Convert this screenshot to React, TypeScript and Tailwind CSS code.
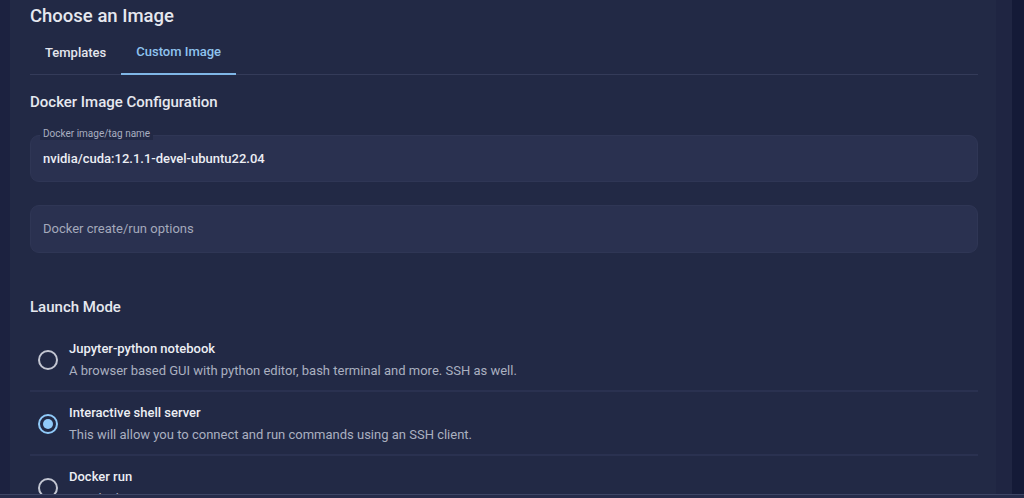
import { useState } from 'react'

type Mode = {
  id: string
  title: string
  description: string
}

const modes: Mode[] = [
  {
    id: 'jupyter',
    title: 'Jupyter-python notebook',
    description: 'A browser based GUI with python editor, bash terminal and more. SSH as well.',
  },
  {
    id: 'ssh',
    title: 'Interactive shell server',
    description: 'This will allow you to connect and run commands using an SSH client.',
  },
  {
    id: 'docker',
    title: 'Docker run',
    description: 'Use docker ENTRYPOINT.',
  },
]

function Radio({ checked }: { checked: boolean }) {
  return (
    <span
      className={`flex h-[20px] w-[20px] shrink-0 items-center justify-center rounded-full border-2 ${
        checked ? 'border-[#90caf9]' : 'border-[#c3c6d2]'
      }`}
    >
      {checked && <span className="h-[10px] w-[10px] rounded-full bg-[#90caf9]" />}
    </span>
  )
}

export default function App() {
  const [tab, setTab] = useState('custom')
  const [mode, setMode] = useState('ssh')

  return (
    <div className="flex h-[498px] overflow-hidden bg-[#141a37] font-['Roboto',sans-serif] text-[#e8eaf0]">
      <div className="w-[10px] shrink-0 bg-[#1c2240]" />

      {/* Main panel */}
      <div className="w-[986px] shrink-0 bg-[#222945] pl-[20px] pr-[18px]">
        <h1 className="pt-[4px] text-[18.5px] font-medium leading-[24px] text-[#e6e8ef]">Choose an Image</h1>

        {/* Tabs */}
        <div className="mt-[2px] flex border-b border-[#343b59]">
          <button
            onClick={() => setTab('templates')}
            className={`-mb-px h-[45px] px-[15px] text-[13px] font-medium ${
              tab === 'templates' ? 'border-b-2 border-[#7fb6e6] text-[#8fc3ef]' : 'text-[#e4e6ee]'
            }`}
          >
            Templates
          </button>
          <button
            onClick={() => setTab('custom')}
            className={`-mb-px h-[45px] px-[15px] text-[13px] font-medium ${
              tab === 'custom' ? 'border-b-2 border-[#7fb6e6] text-[#8fc3ef]' : 'text-[#e4e6ee]'
            }`}
          >
            Custom Image
          </button>
        </div>

        <h2 className="mt-[17px] text-[15px] font-medium leading-[20px] text-[#e6e8ef]">Docker Image Configuration</h2>

        {/* Inputs */}
        <div className="relative mt-[23px]">
          <span className="absolute left-[10px] top-[-7px] bg-[#222945] px-[3px] text-[10px] leading-[12px] text-[#a9aec0]">
            Docker image/tag name
          </span>
          <div className="flex h-[47px] items-center rounded-[9px] border border-[#2f3655] bg-[#2a3150] px-[12px] text-[13px] font-medium text-[#eceef4]">
            nvidia/cuda:12.1.1-devel-ubuntu22.04
          </div>
        </div>

        <div className="mt-[23px] flex h-[48px] items-center rounded-[9px] border border-[#2f3655] bg-[#2a3150] px-[12px] text-[13px] text-[#a4a9bb]">
          Docker create/run options
        </div>

        <h2 className="mt-[44px] text-[15px] font-medium leading-[20px] text-[#e6e8ef]">Launch Mode</h2>

        {/* Launch modes */}
        <div className="mt-[11px] flex flex-col">
          {modes.map((m, i) => (
            <button
              key={m.id}
              onClick={() => setMode(m.id)}
              className={`flex items-center gap-[11px] pl-[8px] pt-[11px] pb-[9px] text-left ${
                i < modes.length - 1 ? 'border-b-2 border-[#2a3150]' : ''
              }`}
            >
              <Radio checked={mode === m.id} />
              <div className="flex flex-col gap-[2px]">
                <span className="text-[13px] font-medium leading-[20px] text-[#eceef4]">{m.title}</span>
                <span className="text-[13px] leading-[20px] text-[#aab0c0]">{m.description}</span>
              </div>
            </button>
          ))}
        </div>
      </div>

      <div className="w-[16px] shrink-0 bg-[#1f2542]" />
      <div className="flex-1 bg-[#141a37]" />

      {/* bottom edge overlay */}
      <div className="fixed bottom-0 left-0 right-0 h-[4px] border-t border-[#3d4564] bg-[#262c4a]" />
    </div>
  )
}
